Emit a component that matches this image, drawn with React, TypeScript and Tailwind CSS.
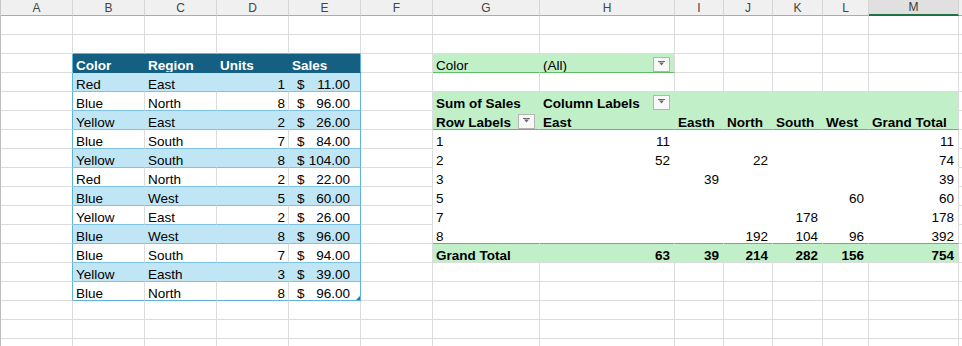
import React from 'react';

type Cell = {
  text?: React.ReactNode;
  right?: boolean;
  bold?: boolean;
  white?: boolean;
  bg: string;
  br: string;
  bb: string;
  filter?: boolean;
  money?: string;
  handle?: boolean;
};

const LETTERS = ['A', 'B', 'C', 'D', 'E', 'F', 'G', 'H', 'I', 'J', 'K', 'L', 'M'];
const ROWS = Array.from({ length: 18 }, (_, i) => i + 1);

const SOURCE: [string, string, number, string][] = [
  ['Red', 'East', 1, '11.00'],
  ['Blue', 'North', 8, '96.00'],
  ['Yellow', 'East', 2, '26.00'],
  ['Blue', 'South', 7, '84.00'],
  ['Yellow', 'South', 8, '104.00'],
  ['Red', 'North', 2, '22.00'],
  ['Blue', 'West', 5, '60.00'],
  ['Yellow', 'East', 2, '26.00'],
  ['Blue', 'West', 8, '96.00'],
  ['Blue', 'South', 7, '94.00'],
  ['Yellow', 'Easth', 3, '39.00'],
  ['Blue', 'North', 8, '96.00'],
];

// pivot body: row label, then values for East, Easth, North, South, West, Grand Total
const PIVOT: (string | number)[][] = [
  ['1', 11, '', '', '', '', 11],
  ['2', 52, '', 22, '', '', 74],
  ['3', '', 39, '', '', '', 39],
  ['5', '', '', '', '', 60, 60],
  ['7', '', '', '', 178, '', 178],
  ['8', '', '', 192, 104, 96, 392],
];
const PIVOT_TOTAL = ['Grand Total', 63, 39, 214, 282, 156, 754];
const PIVOT_HEAD = ['Row Labels', 'East', 'Easth', 'North', 'South', 'West', 'Grand Total'];

const GRID = 'border-r-[#dcdcdc]';
const GRID_B = 'border-b-[#dcdcdc]';

function getCell(r: number, c: number): Cell {
  const cell: Cell = { bg: 'bg-white', br: GRID, bb: GRID_B };

  // source table (B3:E15)
  if (r === 2 && c >= 1 && c <= 4) cell.bb = 'border-b-[#5fb3de]';
  if (r >= 3 && r <= 15) {
    if (c === 0) cell.br = 'border-r-[#5fb3de]';
    if (c >= 1 && c <= 4) {
      const band = r % 2 === 0;
      if (r === 3) {
        cell.bg = 'bg-[#156082]';
        cell.br = c === 4 ? 'border-r-[#5fb3de]' : 'border-r-[#156082]';
        cell.bb = 'border-b-[#156082]';
        cell.white = true;
        cell.bold = true;
        cell.text = ['Color', 'Region', 'Units', 'Sales'][c - 1];
      } else {
        const row = SOURCE[r - 4];
        cell.bg = band ? 'bg-[#c0e6f5]' : 'bg-white';
        cell.br = c === 4 ? 'border-r-[#5fb3de]' : band ? 'border-r-[#c0e6f5]' : GRID;
        cell.bb = 'border-b-[#7cc2e4]';
        if (r === 15) cell.bb = 'border-b-[#5fb3de]';
        if (c === 1) cell.text = row[0];
        if (c === 2) cell.text = row[1];
        if (c === 3) {
          cell.text = row[2];
          cell.right = true;
        }
        if (c === 4) {
          cell.money = row[3];
          if (r === 15) cell.handle = true;
        }
      }
    }
  }

  // pivot report filter (G3:H3)
  if (r === 3 && (c === 6 || c === 7)) {
    cell.bg = 'bg-[#c1f0c8]';
    cell.br = c === 6 ? 'border-r-[#c1f0c8]' : GRID;
    cell.bb = 'border-b-[#5fbd69]';
    cell.text = c === 6 ? 'Color' : '(All)';
    cell.filter = c === 7;
  }

  // pivot table (G5:M13)
  if (r >= 5 && r <= 13 && c >= 6) {
    const k = c - 6;
    const green = r === 5 || r === 6 || r === 13;
    cell.bg = green ? 'bg-[#c1f0c8]' : 'bg-white';
    cell.br = c === 12 ? GRID : green ? 'border-r-[#c1f0c8]' : 'border-r-white';
    if (r === 5) {
      cell.bb = 'border-b-[#c1f0c8]';
      cell.bold = true;
      if (k === 0) cell.text = 'Sum of Sales';
      if (k === 1) {
        cell.text = 'Column Labels';
        cell.filter = true;
      }
    } else if (r === 6) {
      cell.bb = 'border-b-[#5fbd69]';
      cell.bold = true;
      cell.text = PIVOT_HEAD[k];
      if (k === 0) cell.filter = true;
    } else if (r === 13) {
      cell.bb = GRID_B;
      cell.bold = true;
      cell.text = PIVOT_TOTAL[k];
      cell.right = k > 0;
    } else {
      cell.bb = r === 12 ? 'border-b-[#5fbd69]' : 'border-b-white';
      const v = PIVOT[r - 7][k];
      cell.text = v === '' ? undefined : v;
      cell.right = k > 0;
    }
  }

  return cell;
}

const FilterButton = () => (
  <div className="ml-auto flex h-[15px] w-[17px] shrink-0 items-start justify-center self-end border border-[#b4b4b4] bg-[#f8f8f8] pt-[3px]">
    <svg width="7" height="5" viewBox="0 0 7 5">
      <path d="M0 0.5 H7" stroke="#6a6a6a" strokeWidth="1" />
      <path d="M1 1.5 H6 L3.5 4.5 Z" fill="#6a6a6a" />
    </svg>
  </div>
);

const SheetCell: React.FC<{ r: number; c: number }> = ({ r, c }) => {
  const cell = getCell(r, c);
  const pad = c >= 6 ? 'pr-[4px]' : 'pr-[3px]';
  return (
    <div
      className={`relative flex h-[19px] items-end overflow-hidden whitespace-nowrap border-r border-b pl-[3px] leading-[12px] ${pad} ${cell.bg} ${cell.br} ${cell.bb} ${
        cell.right ? 'justify-end' : 'justify-start'
      } ${cell.bold ? 'font-bold' : 'font-normal'} ${cell.white ? 'text-white' : 'text-black'}`}
    >
      {cell.money !== undefined ? (
        <div className="flex w-full justify-between pl-[5px] pr-[7px]">
          <span>$</span>
          <span>{cell.money}</span>
        </div>
      ) : (
        cell.text !== undefined && <span>{cell.text}</span>
      )}
      {cell.filter && <FilterButton />}
      {cell.handle && (
        <div className="absolute right-0 bottom-0 h-0 w-0 border-b-[4px] border-l-[4px] border-b-[#2f6fb3] border-l-transparent" />
      )}
    </div>
  );
};

const COLS =
  'grid grid-cols-[1px_72px_72px_72px_72px_72px_72px_107px_135px_49px_49px_50px_46px_90px_1fr]';

export default function App() {
  return (
    <div
      className="h-[346px] w-[962px] overflow-hidden bg-white text-[13.5px]"
      style={{ fontFamily: '"Liberation Sans", Arial, sans-serif' }}
    >
      {/* column headers */}
      <div className={`${COLS} h-[16px]`}>
        <div className="bg-[#c8c8c8]" />
        {LETTERS.map((l) => (
          <div
            key={l}
            className={
              l === 'M'
                ? 'flex items-center justify-center border-r border-b-2 border-r-[#d0d0d0] border-b-[#1e7145] bg-[#e0e0e0] text-[12px] leading-none text-[#3a3a3a]'
                : 'flex items-center justify-center border-r border-b border-r-[#d6d6d6] border-b-[#ababab] bg-[#f0f0f0] text-[12px] leading-none text-[#444]'
            }
          >
            {l}
          </div>
        ))}
        <div className="border-b border-b-[#ababab] bg-[#f0f0f0]" />
      </div>

      {/* sheet rows */}
      {ROWS.map((r) => (
        <div key={r} className={COLS}>
          <div className="bg-[#bdbdbd]" />
          {LETTERS.map((_, c) => (
            <SheetCell key={c} r={r} c={c} />
          ))}
          <div className="h-[19px] border-b border-b-[#dcdcdc] bg-white" />
        </div>
      ))}
    </div>
  );
}
